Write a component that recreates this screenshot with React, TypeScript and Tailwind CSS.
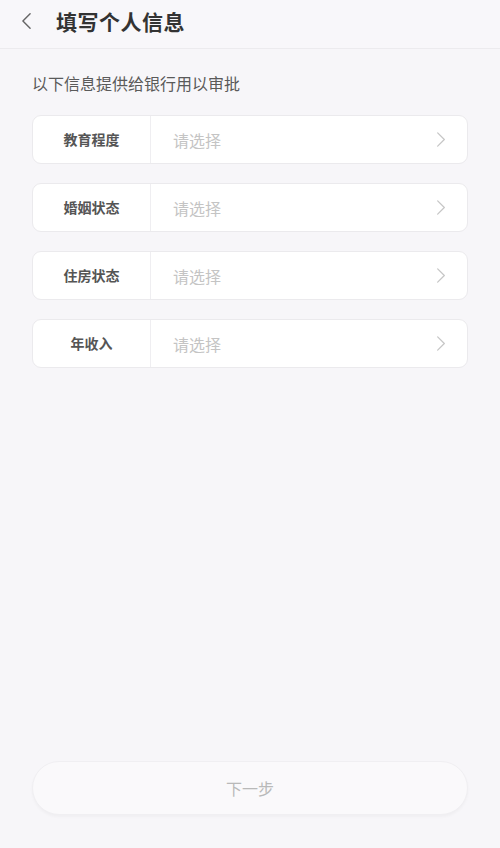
import React from "react";

const rows = ["教育程度", "婚姻状态", "住房状态", "年收入"];

function Chevron({ className }: { className?: string }) {
  return (
    <svg viewBox="0 0 12 20" className={className} fill="none" stroke="currentColor" strokeWidth={1.5} strokeLinecap="round" strokeLinejoin="round">
      <path d="M2 2 L10 10 L2 18" />
    </svg>
  );
}

export default function App() {
  return (
    <div
      className="w-[500px] h-[848px] bg-[#f7f6f9] flex flex-col"
      style={{ fontFamily: '"Noto Sans CJK SC", "Noto Sans", sans-serif' }}
    >
      <div className="h-[49px] flex items-center border-b border-[#ecebee] bg-[#f8f7fa]">
        <svg viewBox="0 0 12 20" className="w-[11px] h-[18px] ml-[21px] -mt-[6px] text-[#666]" fill="none" stroke="currentColor" strokeWidth={1.6} strokeLinecap="round" strokeLinejoin="round">
          <path d="M10 2 L2 10 L10 18" />
        </svg>
        <div className="ml-[24px] -mt-[6px] text-[21px] font-bold text-[#333] leading-none tracking-[0.5px]">填写个人信息</div>
      </div>
      <div className="px-[32px] flex flex-col">
        <div className="mt-[22px] text-[16px] text-[#5a5a5a] leading-[24px]">以下信息提供给银行用以审批</div>
        <div className="mt-[20px] flex flex-col gap-[19px]">
          {rows.map((r) => (
            <div key={r} className="h-[49px] bg-white rounded-[9px] border border-[#ebeaed] flex items-center">
              <div className="w-[118px] h-full flex items-center justify-center border-r border-[#efeef1] text-[14px] font-bold text-[#555]">
                {r}
              </div>
              <div className="flex-1 pl-[22px] text-[16px] text-[#c4c4c4]">请选择</div>
              <Chevron className="w-[10px] h-[17px] mr-[21px] text-[#c6c6c6]" />
            </div>
          ))}
        </div>
      </div>
      <div className="flex-1" />
      <div className="px-[32px] mb-[33px]">
        <div className="h-[54px] rounded-full bg-[#faf9fb] border border-[#f0eff2] flex items-center justify-center text-[16px] text-[#b9b9b9] shadow-[0_2px_3px_rgba(0,0,0,0.03)]">
          下一步
        </div>
      </div>
    </div>
  );
}
